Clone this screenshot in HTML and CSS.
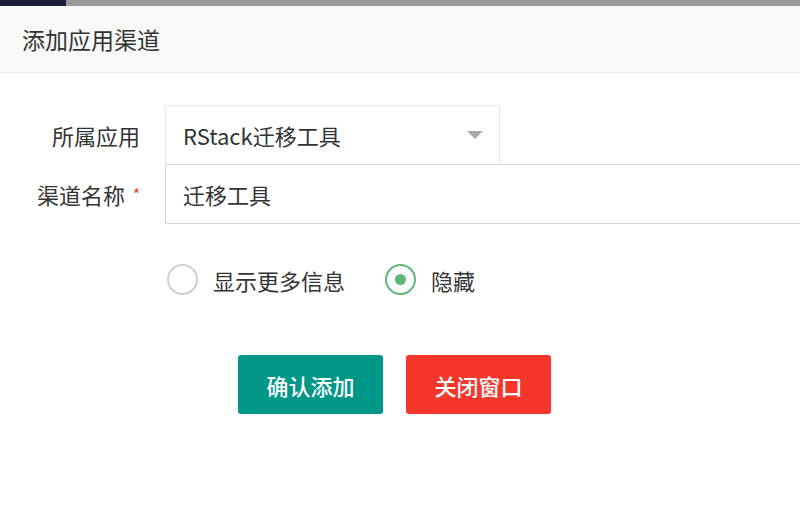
FILE: index.html
```html
<!DOCTYPE html>
<html lang="zh">
<head>
<meta charset="utf-8">
<title>添加应用渠道</title>
<link rel="stylesheet" href="styles.css">
</head>
<body>
<div class="topbar"><div class="topbar-active"></div></div>
<div class="header">添加应用渠道</div>
<form class="form">
  <div class="row">
    <label class="label">所属应用</label>
    <div class="select">
      <span class="select-text">RStack迁移工具</span>
      <span class="arrow"></span>
    </div>
  </div>
  <div class="row row-tight">
    <label class="label">渠道名称<span class="req">*</span></label>
    <div class="input">迁移工具</div>
  </div>
  <div class="radios">
    <div class="radio"><span class="circle"></span><span class="radio-text">显示更多信息</span></div>
    <div class="radio"><span class="circle on"></span><span class="radio-text">隐藏</span></div>
  </div>
  <div class="buttons">
    <div class="btn btn-ok">确认添加</div>
    <div class="btn btn-close">关闭窗口</div>
  </div>
</form>
</body>
</html>
```

FILE: styles.css
```css
html, body {
  margin: 0;
  padding: 0;
  background: #fff;
  overflow: hidden;
  font-family: "Noto Sans CJK SC", "Noto Sans", sans-serif;
  color: #333;
}
.topbar {
  height: 6px;
  background: #9b9b99;
  display: flex;
}
.topbar-active {
  width: 66px;
  background: #1b1e3a;
}
.header {
  height: 66px;
  line-height: 66px;
  padding-left: 22px;
  background: #f8f8f8;
  border-bottom: 1px solid #ebebeb;
  font-size: 23px;
  color: #333;
}
.form {
  padding-top: 32px;
  margin: 0;
}
.row {
  display: flex;
  align-items: center;
}
.row-tight {
  margin-top: -1px;
}
.label {
  flex: none;
  width: 140px;
  padding-right: 25px;
  text-align: right;
  font-size: 22px;
  color: #333;
  white-space: nowrap;
}
.req {
  color: #e33;
  font-size: 15px;
  margin-left: 8px;
  position: relative;
  top: -4px;
}
.select {
  box-sizing: border-box;
  flex: none;
  width: 335px;
  height: 60px;
  border: 1px solid #e6e6e6;
  border-radius: 2px;
  display: flex;
  align-items: center;
  justify-content: space-between;
  padding: 0 16px 0 17px;
  font-size: 22px;
  color: #333;
}
.arrow {
  width: 0;
  height: 0;
  border-left: 8px solid transparent;
  border-right: 8px solid transparent;
  border-top: 8px solid #a9a9a9;
}
.input {
  box-sizing: border-box;
  flex: 1;
  height: 60px;
  border: 1px solid #d4d4d4;
  border-right: none;
  border-radius: 2px 0 0 2px;
  display: flex;
  align-items: center;
  padding-left: 17px;
  font-size: 22px;
  color: #333;
}
.radios {
  display: flex;
  align-items: center;
  padding-left: 167px;
  margin-top: 40px;
  height: 31px;
}
.radio {
  display: flex;
  align-items: center;
  margin-right: 40px;
}
.circle {
  box-sizing: border-box;
  width: 31px;
  height: 31px;
  border: 2px solid #cfcfcf;
  border-radius: 50%;
  display: flex;
  align-items: center;
  justify-content: center;
  margin-right: 15px;
}
.circle.on {
  border-color: #5fb878;
}
.circle.on::after {
  content: "";
  width: 11px;
  height: 11px;
  border-radius: 50%;
  background: #5fb878;
}
.radio-text {
  font-size: 22px;
  color: #333;
}
.buttons {
  display: flex;
  gap: 23px;
  padding-left: 238px;
  margin-top: 60px;
}
.btn {
  width: 145px;
  height: 59px;
  border-radius: 3px;
  display: flex;
  align-items: center;
  justify-content: center;
  color: #fff;
  font-size: 22px;
  font-weight: 500;
}
.btn-ok {
  background: #009688;
}
.btn-close {
  background: #f5362b;
}
```
